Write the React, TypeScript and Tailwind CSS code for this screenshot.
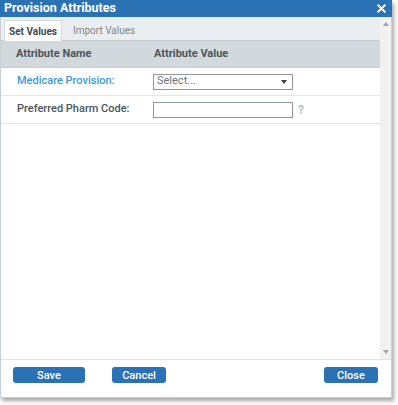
import React, { useState } from 'react';

export default function App() {
  const [tab, setTab] = useState<'set' | 'import'>('set');
  const [code, setCode] = useState('');

  return (
    <div className="w-[398px] h-[405px] bg-white font-['Roboto',sans-serif]">
      <div className="w-[392px] h-[398px] flex flex-col border border-[#c9cfd3] shadow-[2px_3px_4px_rgba(0,0,0,0.35)] bg-white">
        {/* title bar */}
        <div className="h-[17px] bg-[#2b72b5] flex items-center justify-between pl-[4px] pr-[6px] -mx-px -mt-px">
          <span className="text-white text-[12.5px] font-bold leading-none">Provision Attributes</span>
          <svg width="9" height="9" viewBox="0 0 10 10" className="text-white">
            <path d="M1.5 1.5l7 7M8.5 1.5l-7 7" stroke="currentColor" strokeWidth="2.2" strokeLinecap="square" />
          </svg>
        </div>

        <div className="flex flex-1 min-h-0">
          <div className="flex-1 flex flex-col">
            {/* tabs */}
            <div className="h-[24px] bg-[#ebeef0] flex items-end pl-[3px] border-b border-[#c4ccd0]">
              <button
                onClick={() => setTab('set')}
                className={`h-[21px] w-[58px] pt-[1px] text-[10px] font-bold border border-b-0 border-[#d5dadd] -mb-px ${tab === 'set' ? 'bg-white text-[#3f4a50]' : 'bg-transparent text-[#7b858a]'}`}
              >
                Set Values
              </button>
              <button
                onClick={() => setTab('import')}
                className={`h-[21px] px-[11px] pt-[1px] text-[10px] ${tab === 'import' ? 'bg-white text-[#3f4a50] font-bold' : 'text-[#7b858a]'}`}
              >
                Import Values
              </button>
            </div>

            {/* table header */}
            <div className="h-[27px] bg-[#d2d9dc] flex items-center text-[11px] font-bold text-[#4b555a] border-b border-[#c8d0d4]">
              <span className="pl-[15px] w-[153px]">Attribute Name</span>
              <span>Attribute Value</span>
            </div>

            {/* rows */}
            <div className="h-[28px] flex items-center border-b border-[#e3e7ea]">
              <span className="pl-[16px] w-[152px] text-[11px] font-medium text-[#3c9ad6]">Medicare Provision:</span>
              <div className="w-[140px] h-[16px] border border-[#8f9599] flex items-center justify-between pl-[3px] pr-[5px] text-[11px] text-[#6c7479]">
                <span>Select...</span>
                <svg width="6" height="4" viewBox="0 0 6 4"><path d="M0 0h6L3 4z" fill="#3a3f42" /></svg>
              </div>
            </div>
            <div className="h-[28px] flex items-center border-b border-[#e3e7ea]">
              <span className="pl-[16px] w-[152px] text-[11px] font-medium text-[#4b555a]">Preferred Pharm Code:</span>
              <input
                value={code}
                onChange={(e) => setCode(e.target.value)}
                className="w-[140px] h-[16px] border border-[#8f9599] outline-none text-[11px] px-[3px]"
              />
              <span className="ml-[5px] text-[12px] font-bold text-[#b8c0c4]">?</span>
            </div>
            <div className="flex-1" />
          </div>

          {/* scrollbar */}
          <div className="w-[11px] bg-[#f1f1f1] flex flex-col items-center justify-between py-[5px]">
            <svg width="6" height="4" viewBox="0 0 6 4"><path d="M0 4h6L3 0z" fill="#a3a3a3" /></svg>
            <svg width="6" height="4" viewBox="0 0 6 4"><path d="M0 0h6L3 4z" fill="#a3a3a3" /></svg>
          </div>
        </div>

        {/* footer */}
        <div className="h-[38px] border-t border-[#dfe4e7] flex items-start pt-[7px] pl-[12px] pr-[13px]">
          <button className="w-[72px] h-[16px] rounded-[3px] bg-[#2b72b5] text-white text-[11px] font-medium leading-none">Save</button>
          <button className="ml-[27px] w-[54px] h-[16px] rounded-[3px] bg-[#2b72b5] text-white text-[11px] font-medium leading-none">Cancel</button>
          <div className="flex-1" />
          <button className="w-[54px] h-[16px] rounded-[3px] bg-[#2b72b5] text-white text-[11px] font-medium leading-none">Close</button>
        </div>
      </div>
    </div>
  );
}
